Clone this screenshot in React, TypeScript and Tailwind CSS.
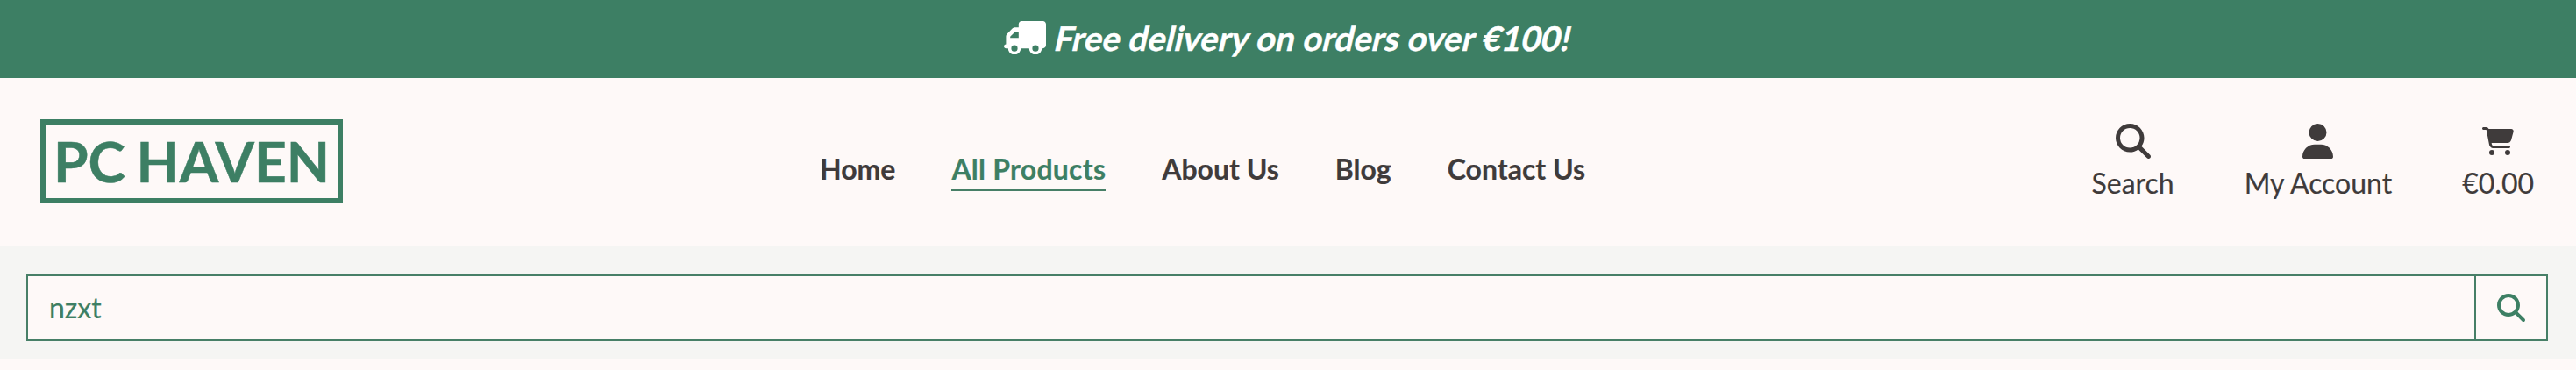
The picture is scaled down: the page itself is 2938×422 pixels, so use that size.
import type { ReactNode } from "react";
import { FaTruck, FaMagnifyingGlass, FaUser, FaCartShopping } from "react-icons/fa6";

const links = [
  { label: "Home" },
  { label: "All Products", active: true },
  { label: "About Us" },
  { label: "Blog" },
  { label: "Contact Us" },
];

function Action({ icon, label, className = "" }: { icon: ReactNode; label: string; className?: string }) {
  return (
    <a href="#" className={`flex flex-col items-center ${className}`}>
      <span className="flex h-[49px] items-center pt-px">{icon}</span>
      <span className="[-webkit-text-stroke:0.2px_#3f3b3b]">{label}</span>
    </a>
  );
}

export default function App() {
  return (
    <div className="h-[422px] overflow-hidden bg-[#fef9f8] font-['Lato',sans-serif] text-[32px] leading-[48px] text-[#3f3b3b]">
      <div className="flex h-[89px] items-center justify-center gap-[11px] bg-[#3d7f64] pb-[3px] pr-px text-white">
        <FaTruck className="h-[38.4px] w-[48px] -scale-x-100" />
        <p className="-skew-x-[13deg] text-[38.4px] font-bold leading-[58px] tracking-[0.1px] [-webkit-text-stroke:0.4px_white]">
          Free delivery on orders over €100!
        </p>
      </div>

      <header className="flex h-48 items-start pt-[47px]">
        <a
          href="#"
          className="ml-[46px] flex h-24 w-[345px] items-center justify-center whitespace-nowrap border-[6px] border-[#3d7f64] text-[64px] font-bold leading-none text-[#3d7f64] [word-spacing:-3px] [-webkit-text-stroke:0.5px_#3d7f64]"
        >
          PC HAVEN
        </a>
        <nav className="ml-[544px] mt-8 flex gap-16 whitespace-nowrap font-bold">
          {links.map(({ label, active }) => (
            <a
              key={label}
              href="#"
              className={
                active
                  ? "h-[50px] border-b-[3px] border-[#477f67] pt-px tracking-[0.24px] text-[#3d7f64] [-webkit-text-stroke:0.2px_#3d7f64]"
                  : "h-[50px] pt-px [-webkit-text-stroke:0.2px_#3f3b3b]"
              }
            >
              {label}
            </a>
          ))}
        </nav>
        <div className="ml-auto mr-12 flex gap-20 whitespace-nowrap">
          <Action icon={<FaMagnifyingGlass className="size-10" />} label="Search" />
          <Action icon={<FaUser className="h-10 w-[35px]" />} label="My Account" />
          <Action icon={<FaCartShopping className="h-8 w-9" />} label="€0.00" />
        </div>
      </header>

      <div className="h-32 bg-[#f5f5f3] pl-[30px] pr-8 pt-8">
        <form className="flex h-[76px] border-2 border-[#477f67] bg-[#fef9f8] text-[#3d7f64]">
          <div className="flex flex-1 items-center pl-6 [-webkit-text-stroke:0.2px_#3d7f64]">nzxt</div>
          <button type="button" className="flex w-[82px] items-center justify-center border-l-2 border-[#477f67]">
            <FaMagnifyingGlass className="size-8" />
          </button>
        </form>
      </div>
    </div>
  );
}
